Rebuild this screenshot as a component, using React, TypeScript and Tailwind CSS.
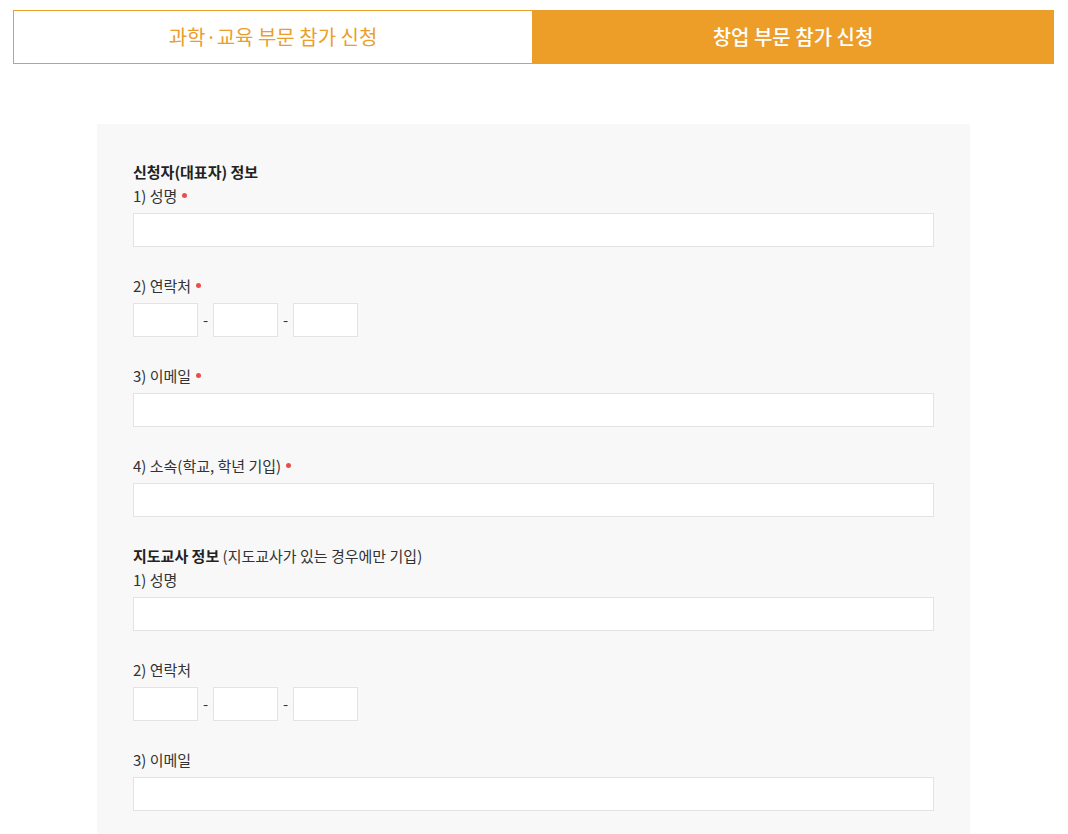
import React from "react";

const font = { fontFamily: '"Noto Sans CJK KR", "Noto Sans", sans-serif' };

function Dot() {
  return <span className="ml-[5px] inline-block h-[5px] w-[5px] translate-y-[-2px] rounded-full bg-[#e94e4e] align-middle" />;
}

function Label({ text, required }: { text: string; required?: boolean }) {
  return (
    <div className="h-[24px] text-[15px] leading-[24px] text-[#333]">
      {text}
      {required && <Dot />}
    </div>
  );
}

function TextInput() {
  return <input type="text" className="mt-[5px] block h-[34px] w-full border border-[#e3e3e3] bg-white outline-none" />;
}

function PhoneInput() {
  return (
    <div className="mt-[5px] flex items-center">
      <input type="text" className="h-[34px] w-[65px] border border-[#e3e3e3] bg-white outline-none" />
      <span className="w-[15px] text-center text-[15px] text-[#333]">-</span>
      <input type="text" className="h-[34px] w-[65px] border border-[#e3e3e3] bg-white outline-none" />
      <span className="w-[15px] text-center text-[15px] text-[#333]">-</span>
      <input type="text" className="h-[34px] w-[65px] border border-[#e3e3e3] bg-white outline-none" />
    </div>
  );
}

function Field({ label, required, phone, last }: { label: string; required?: boolean; phone?: boolean; last?: boolean }) {
  return (
    <div className={last ? "" : "mb-[27px]"}>
      <Label text={label} required={required} />
      {phone ? <PhoneInput /> : <TextInput />}
    </div>
  );
}

export default function App() {
  return (
    <div className="min-h-[834px] bg-white" style={font}>
      <div className="flex pl-[13px] pt-[10px]">
        <button
          type="button"
          className="flex h-[54px] w-[519px] items-center justify-center border border-r-0 border-[#eb9e2a] bg-white text-[20px] font-normal text-[#eb9e2a]"
        >
          과학·교육 부문 참가 신청
        </button>
        <button
          type="button"
          className="flex h-[54px] w-[522px] items-center justify-center bg-[#ec9e29] text-[20px] font-medium text-white"
        >
          창업 부문 참가 신청
        </button>
      </div>

      <div className="ml-[97px] mt-[60px] w-[873px] bg-[#f8f8f8] px-[36px] pb-[40px] pt-[36px]">
        <div className="h-[24px] text-[15px] font-bold leading-[24px] text-[#222]">신청자(대표자) 정보</div>
        <Field label="1) 성명" required />
        <Field label="2) 연락처" required phone />
        <Field label="3) 이메일" required />
        <Field label="4) 소속(학교, 학년 기입)" required />

        <div className="h-[24px] text-[15px] leading-[24px] text-[#333]">
          <span className="font-bold text-[#222]">지도교사 정보</span> (지도교사가 있는 경우에만 기입)
        </div>
        <Field label="1) 성명" />
        <Field label="2) 연락처" phone />
        <Field label="3) 이메일" last />
      </div>
    </div>
  );
}
